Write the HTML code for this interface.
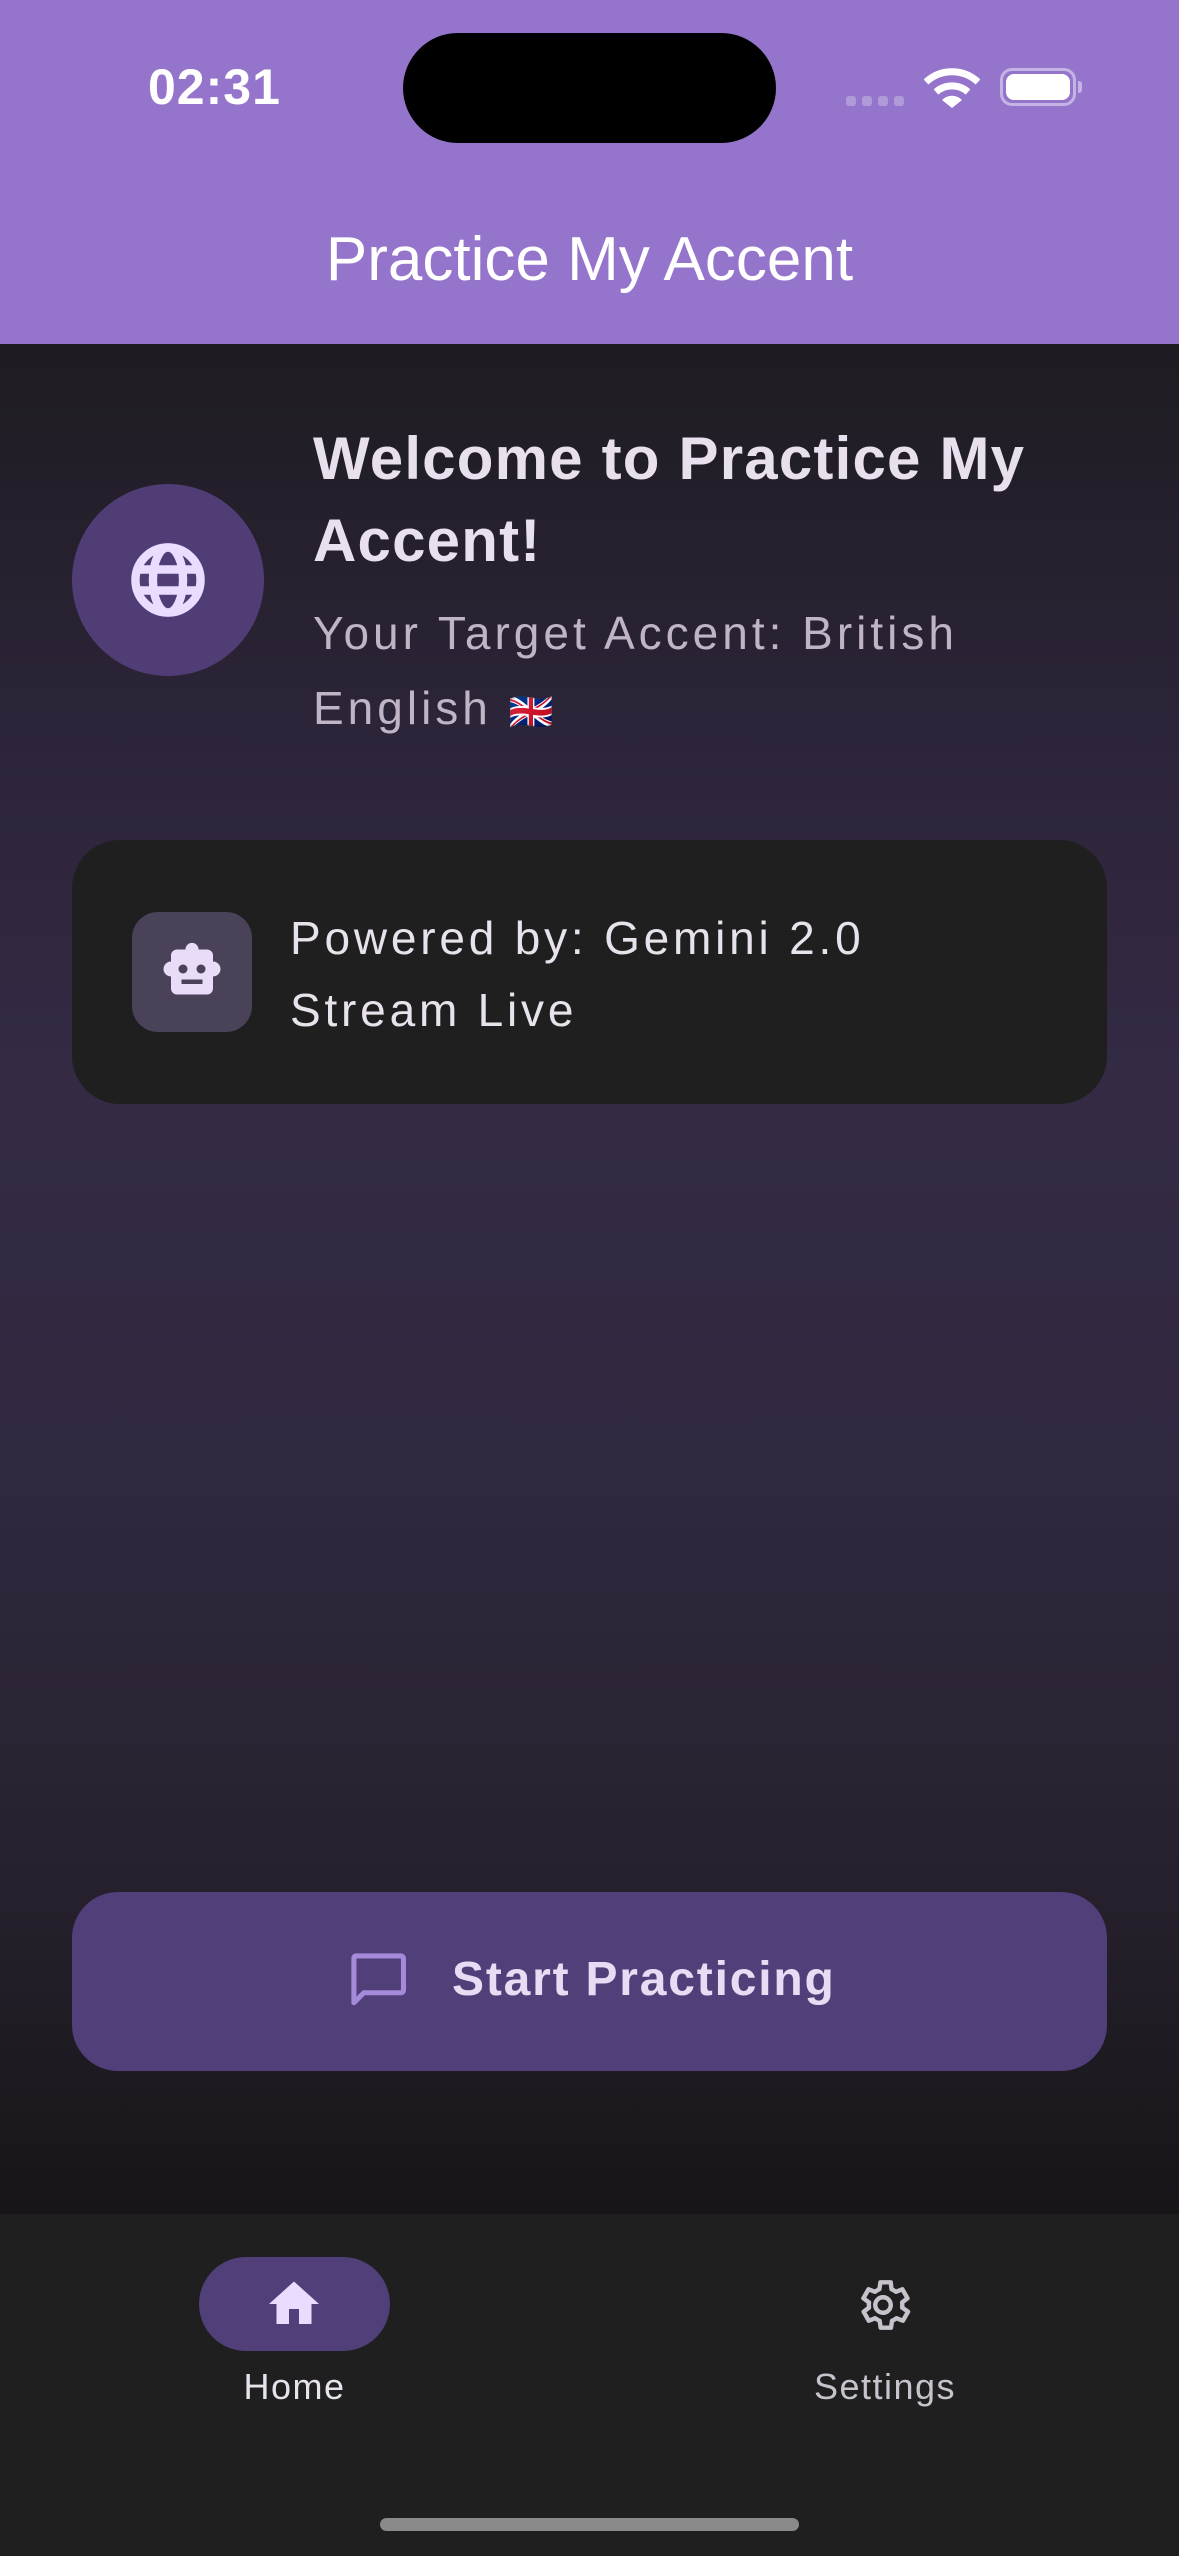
<!DOCTYPE html>
<html><head><meta charset="utf-8"><style>
*{margin:0;padding:0;box-sizing:border-box}
body{width:1179px;height:2556px;overflow:hidden;font-family:"Liberation Sans","DejaVu Sans",sans-serif;background:#1b191d;position:relative}
.abs{position:absolute}
#hdr{left:0;top:0;width:1179px;height:344px;background:#9575cc}
#main{left:0;top:344px;width:1179px;height:1870px;background:linear-gradient(#1e1c21 0%,#2c2438 20%,#342a44 40%,#30283f 60%,#28222f 80%,#171518 100%)}
#nav{left:0;top:2214px;width:1179px;height:342px;background:#1f1f1f}
</style></head><body>
<div id="hdr" class="abs"></div>
<div class="abs" style="left:148px;top:58px;font-size:50px;font-weight:bold;color:#fff;letter-spacing:1px">02:31</div>
<div class="abs" style="left:403px;top:33px;width:373px;height:110px;border-radius:55px;background:#000"></div>
<div class="abs" style="left:846px;top:96px;width:10px;height:10px;border-radius:3px;background:#b09ad8;box-shadow:16px 0 #b09ad8,32px 0 #b09ad8,48px 0 #b09ad8"></div>
<svg class="abs" style="left:924px;top:66px" width="56" height="44" viewBox="0 0 56 44"><path d="M2 16 A38 38 0 0 1 54 16" stroke="#fff" stroke-width="7" fill="none"/><path d="M12 26 A24 24 0 0 1 44 26" stroke="#fff" stroke-width="7" fill="none"/><path d="M28 42 L18 34 A14 14 0 0 1 38 34 Z" fill="#fff"/></svg>
<div class="abs" style="left:1000px;top:68px;width:76px;height:38px;border:3px solid #c4b3e4;border-radius:12px"></div>
<div class="abs" style="left:1006px;top:74px;width:64px;height:26px;background:#fff;border-radius:8px"></div>
<div class="abs" style="left:1078px;top:81px;width:4px;height:12px;background:#c4b3e4;border-radius:0 3px 3px 0"></div>
<div class="abs" style="left:0;top:224px;width:1179px;text-align:center;font-size:62px;color:#fff">Practice My Accent</div>

<div id="main" class="abs"></div>
<div class="abs" style="left:72px;top:484px;width:192px;height:192px;border-radius:50%;background:#503d75"></div>
<svg class="abs" style="left:126px;top:538px" width="84" height="84" viewBox="0 0 24 24"><circle cx="12" cy="12" r="9.3" stroke="#eadcff" stroke-width="2.4" fill="none"/><ellipse cx="12" cy="12" rx="4.3" ry="9.3" stroke="#eadcff" stroke-width="2.4" fill="none"/><path d="M2.5 9h19M2.5 15h19" stroke="#eadcff" stroke-width="2.4"/></svg>
<div class="abs" style="left:313px;top:418px;width:800px;font-size:60px;font-weight:bold;line-height:82px;color:#e8e0ec;letter-spacing:1.2px">Welcome to Practice My<br>Accent!</div>
<div class="abs" style="left:313px;top:596px;width:760px;font-size:46px;line-height:75px;color:#bfb5c6;letter-spacing:4px">Your Target Accent: British<br>English <span style="font-size:36px">🇬🇧</span></div>

<div class="abs" style="left:72px;top:840px;width:1035px;height:264px;border-radius:48px;background:#1f1f1f"></div>
<div class="abs" style="left:132px;top:912px;width:120px;height:120px;border-radius:26px;background:#4a4259"></div>
<svg class="abs" style="left:156px;top:940px" width="72" height="64" viewBox="0 0 24 21"><circle cx="12" cy="3" r="2.2" fill="#e8dcf8"/><rect x="5" y="3" width="14" height="15" rx="2" fill="#e8dcf8"/><rect x="2.5" y="7" width="19" height="5" rx="2.5" fill="#e8dcf8"/><circle cx="9" cy="9.5" r="1.5" fill="#4a4259"/><circle cx="15" cy="9.5" r="1.5" fill="#4a4259"/><rect x="8.5" y="13" width="7" height="1.5" fill="#4a4259"/></svg>
<div class="abs" style="left:290px;top:902px;width:780px;font-size:46px;line-height:72px;color:#e8e2ec;letter-spacing:3.8px">Powered by: Gemini 2.0<br>Stream Live</div>

<div class="abs" style="left:72px;top:1892px;width:1035px;height:179px;border-radius:46px;background:#513f79"></div>
<svg class="abs" style="left:344px;top:1946px" width="68" height="68" viewBox="0 0 24 24"><path d="M4 3.5h16a1 1 0 0 1 1 1v11a1 1 0 0 1-1 1H7l-3.5 3.5V4.5a1 1 0 0 1 .5-1z" stroke="#a48ad8" stroke-width="1.8" fill="none" stroke-linejoin="round"/></svg>
<div class="abs" style="left:452px;top:1952px;font-size:48px;font-weight:bold;color:#e8dcf4;letter-spacing:1.8px">Start Practicing</div>

<div id="nav" class="abs"></div>
<div class="abs" style="left:199px;top:2257px;width:191px;height:94px;border-radius:47px;background:#513f79"></div>
<svg class="abs" style="left:264px;top:2274px" width="60" height="60" viewBox="0 0 24 24"><path d="M10 20v-6h4v6h5v-8h3L12 3 2 12h3v8z" fill="#eadcff"/></svg>
<div class="abs" style="left:199px;top:2366px;width:191px;text-align:center;font-size:36px;color:#e8e2ec;letter-spacing:1.5px">Home</div>
<svg class="abs" style="left:852px;top:2274px" width="62" height="62" viewBox="0 0 24 24"><path d="M19.4 13a7.5 7.5 0 0 0 0-2l2.1-1.6-2-3.5-2.5 1a7 7 0 0 0-1.7-1L15 3.2h-4l-.4 2.7a7 7 0 0 0-1.7 1l-2.5-1-2 3.5L6.6 11a7.5 7.5 0 0 0 0 2l-2.1 1.6 2 3.5 2.5-1a7 7 0 0 0 1.7 1l.4 2.7h4l.4-2.7a7 7 0 0 0 1.7-1l2.5 1 2-3.5z" stroke="#c8c2cc" stroke-width="1.7" fill="none" stroke-linejoin="round"/><circle cx="12" cy="12" r="3" stroke="#c8c2cc" stroke-width="1.7" fill="none"/></svg>
<div class="abs" style="left:760px;top:2366px;width:250px;text-align:center;font-size:36px;color:#c8c2cc;letter-spacing:1.5px">Settings</div>
<div class="abs" style="left:380px;top:2518px;width:419px;height:13px;border-radius:7px;background:#8a8a8a"></div>
</body></html>
